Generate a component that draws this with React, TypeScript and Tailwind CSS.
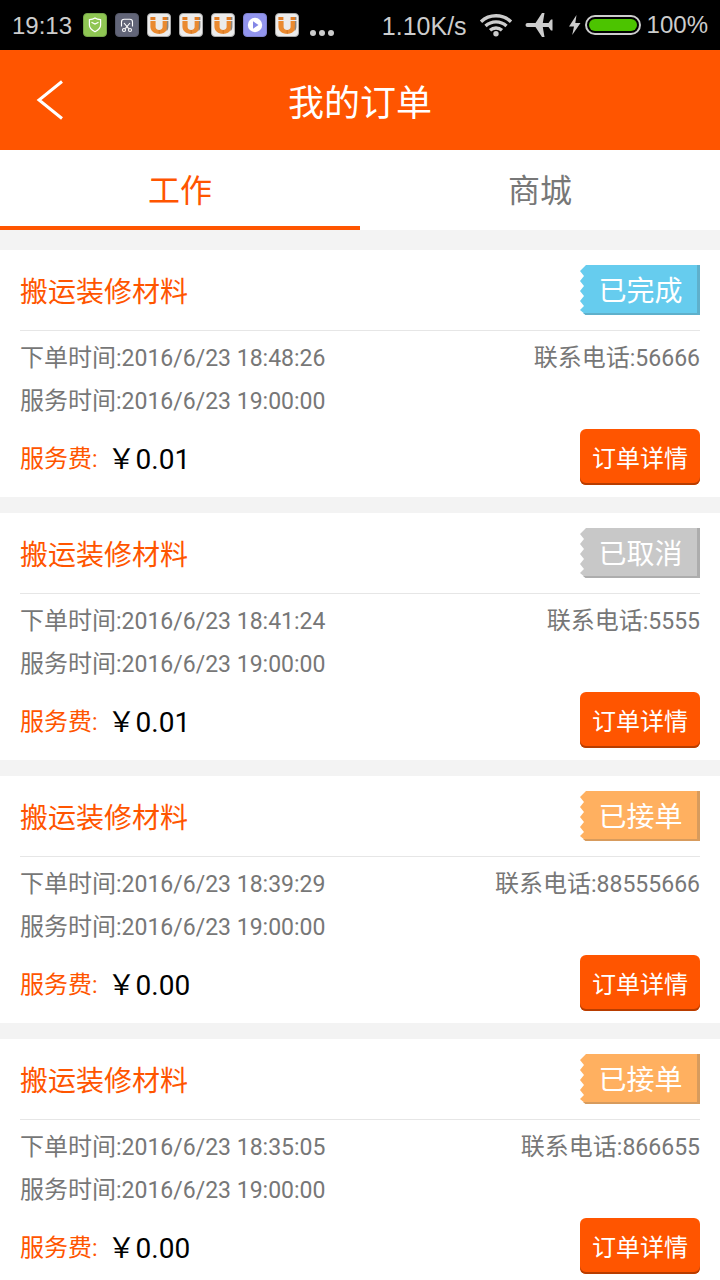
import { useState } from 'react';
import type { ReactNode } from 'react';

type Status = 'done' | 'cancelled' | 'accepted';

interface Order {
  id: number;
  title: string;
  status: Status;
  orderedAt: string;
  serviceAt: string;
  phone: string;
  fee: string;
}

const ORDERS: Order[] = [
  { id: 1, title: '搬运装修材料', status: 'done', orderedAt: '2016/6/23 18:48:26', serviceAt: '2016/6/23 19:00:00', phone: '56666', fee: '0.01' },
  { id: 2, title: '搬运装修材料', status: 'cancelled', orderedAt: '2016/6/23 18:41:24', serviceAt: '2016/6/23 19:00:00', phone: '5555', fee: '0.01' },
  { id: 3, title: '搬运装修材料', status: 'accepted', orderedAt: '2016/6/23 18:39:29', serviceAt: '2016/6/23 19:00:00', phone: '88555666', fee: '0.00' },
  { id: 4, title: '搬运装修材料', status: 'accepted', orderedAt: '2016/6/23 18:35:05', serviceAt: '2016/6/23 19:00:00', phone: '866655', fee: '0.00' },
];

const STATUS = {
  done: { label: '已完成', box: 'bg-[#66ccee] border-[#5fb0cb]', edge: 'fill-[#66ccee]', shade: 'fill-[#5fb0cb]' },
  cancelled: { label: '已取消', box: 'bg-[#c8c8c8] border-[#adadad]', edge: 'fill-[#c8c8c8]', shade: 'fill-[#adadad]' },
  accepted: { label: '已接单', box: 'bg-[#ffb060] border-[#d79b5d]', edge: 'fill-[#ffb060]', shade: 'fill-[#d79b5d]' },
};

const TABS = ['工作', '商城'];

function MagnetIcon() {
  return (
    <svg viewBox="0 0 24 24" className="size-6">
      <rect x="0.5" y="0.5" width="23" height="23" rx="3.5" fill="#ececec" stroke="#a9a9a9" />
      <path d="M8.6 8v6.2a3.6 3.6 0 0 0 7 0V8h5v5.5c0 4.5-3.5 7.3-8.5 7.3s-8.7-2.8-8.7-7.3V8z" fill="#ea8a30" />
      <path d="M3.4 4h5v3h-5zM15.6 4h5v3h-5z" fill="#e27d24" />
      <path d="M20 4h1.4v3H20zM20 8h1.4v5.5c0 2-.6 3.6-1.8 4.8z" fill="#8b8580" />
      <path d="M12.2 17v4" stroke="#c96a1c" strokeWidth="0.7" />
    </svg>
  );
}

function ShieldIcon() {
  return (
    <svg viewBox="0 0 24 24" className="size-6">
      <rect x="0.5" y="0.5" width="23" height="23" rx="3.5" fill="#8fc653" stroke="#75a648" />
      <path d="M12 5c1.6 1.2 3.5 1.6 5.6 1.7V12c0 3.2-2.3 5.1-5.6 6.8-3.3-1.7-5.6-3.6-5.6-6.8V6.7C8.5 6.6 10.4 6.2 12 5z" fill="none" stroke="#fff" strokeWidth="1.2" />
      <path d="M8.5 9.3 12 11l3.5-1.7" fill="none" stroke="#fff" strokeWidth="1.2" />
    </svg>
  );
}

function ScissorsIcon() {
  return (
    <svg viewBox="0 0 24 24" className="size-6">
      <rect x="0.5" y="0.5" width="23" height="23" rx="3.5" fill="#626578" stroke="#555869" />
      <g fill="none" stroke="#fff" strokeWidth="1.1">
        <path d="M6.5 13.5V9c0-1.7 1-2.7 2.7-2.7h5.6c1.7 0 2.7 1 2.7 2.7v4.5" />
        <path d="m9 10 4.7 5.7M15 10l-4.7 5.7" />
        <circle cx="9" cy="17" r="1.5" />
        <circle cx="15" cy="17" r="1.5" />
      </g>
    </svg>
  );
}

function PlayIcon() {
  return (
    <svg viewBox="0 0 24 24" className="size-6">
      <rect x="0.5" y="0.5" width="23" height="23" rx="3.5" fill="#9295ee" stroke="#7f82cf" />
      <circle cx="12" cy="12" r="7.2" fill="#fff" />
      <path d="M10 8.3v7.4l5.5-3.7z" fill="#8487e6" />
    </svg>
  );
}

function StatusBar() {
  return (
    <div className="flex h-[50px] shrink-0 items-center justify-between bg-black px-3 font-['Liberation_Sans',Arial,sans-serif] text-[24px] leading-none text-[#cccccc]">
      <div className="flex items-center gap-2">
        <span className="w-[63px] pt-0.5 whitespace-nowrap">19:13</span>
        <ShieldIcon />
        <ScissorsIcon />
        <MagnetIcon />
        <MagnetIcon />
        <MagnetIcon />
        <PlayIcon />
        <MagnetIcon />
        <svg viewBox="0 0 28 24" className="h-6 w-7" fill="currentColor">
          <circle cx="6" cy="20" r="3" />
          <circle cx="15" cy="20" r="3" />
          <circle cx="24" cy="20" r="3" />
        </svg>
      </div>
      <div className="flex items-center">
        <span className="pt-0.5 text-[25px]">1.10K/s</span>
        {/* wifi */}
        <svg viewBox="0 0 34 24" className="ml-3 h-6 w-[34px]" fill="none" stroke="currentColor" strokeWidth="3.4">
          <path d="M2 8.7a22 22 0 0 1 30 0M6.5 13a15.500 15.500 0 0 1 21 0M11 17.200a9.300 9.300 0 0 1 12 0" />
          <circle cx="17" cy="20.700" r="2.700" fill="currentColor" stroke="none" />
        </svg>
        {/* airplane mode */}
        <svg viewBox="0 0 28 24" className="ml-3 h-6 w-7" fill="currentColor">
          <path d="M2.500 10h8L17 0h2.500l-1.700 10h5.700L26 6.500h1.500V17.500H26L23.500 14h-5.700l1.700 10H17l-6.500-10h-8a2 2 0 0 1 0-4z" />
        </svg>
        {/* charging battery */}
        <svg viewBox="0 0 12 20" className="ml-4 h-5 w-3" fill="currentColor">
          <path d="M7.500 0 0 11.500h5L3.200 20 11.500 8H6.300z" />
        </svg>
        <svg viewBox="0 0 56 20" className="ml-1 h-5 w-14">
          <rect x="1" y="1" width="54" height="18" rx="9" fill="none" stroke="#cccccc" strokeWidth="2" />
          <rect x="4" y="4" width="48" height="12" rx="6" fill="#4cc400" />
        </svg>
        <span className="ml-1.5">100%</span>
      </div>
    </div>
  );
}

function StatusBadge({ status }: { status: Status }) {
  const s = STATUS[status];
  return (
    <div className="flex h-[50px] w-[120px]">
      <svg viewBox="0 0 6 50" className="h-full w-1.5 shrink-0">
        <path d="M6 0 0 6l4 5-4 5 4 5-4 5 4 5-4 5 4 5-4 4 6 5z" className={s.edge} />
        <path d="M3 48h3v2H5.500z" className={s.shade} />
      </svg>
      <span className={`flex flex-1 items-center justify-center border-r-3 border-b-2 pr-0.5 text-[28px] text-white ${s.box}`}>
        {s.label}
      </span>
    </div>
  );
}

// latin digits next to the chinese labels
function Latin({ children }: { children: ReactNode }) {
  return <span className="font-[Roboto,sans-serif] text-[23px] leading-none">{children}</span>;
}

function OrderCard({ order }: { order: Order }) {
  return (
    <article className="shrink-0 bg-white px-5 pb-3">
      <div className="flex h-[81px] items-center justify-between border-b border-[#e6e6e6]">
        <h2 className="text-[28px] text-[#ff5500]">{order.title}</h2>
        <StatusBadge status={order.status} />
      </div>

      <div className="pt-[3px] text-[24px] leading-[43px] text-[#777777]">
        <div className="flex justify-between">
          <p>下单时间<Latin>:{order.orderedAt}</Latin></p>
          <p>联系电话<Latin>:{order.phone}</Latin></p>
        </div>
        <p>服务时间<Latin>:{order.serviceAt}</Latin></p>
      </div>

      <div className="mt-[9px] flex items-center justify-between">
        <p className="flex items-center gap-2.5">
          <span className="text-[24px] text-[#ff5500]">服务费<Latin>:</Latin></span>
          <span className="text-[28px] text-black">
            ￥<span className="font-[Roboto,sans-serif] leading-none">{order.fee}</span>
          </span>
        </p>
        <button
          type="button"
          className="h-14 w-[120px] rounded-md bg-[#ff5500] text-[24px] text-white shadow-[inset_0_-2px_0_#b83d00]"
        >
          订单详情
        </button>
      </div>
    </article>
  );
}

export default function App() {
  const [tab, setTab] = useState(0);

  return (
    <div className="flex h-screen flex-col bg-[#f3f3f3] font-['Noto_Sans_CJK_SC',sans-serif]">
      <StatusBar />

      <header className="grid h-[100px] shrink-0 grid-cols-[100px_1fr_100px] items-center bg-[#ff5500] text-white">
        <button type="button" aria-label="返回" className="flex h-full items-center justify-center">
          <svg viewBox="0 0 28 40" className="h-10 w-7" fill="none" stroke="currentColor" strokeWidth="3">
            <path d="M26 1.500 3 20l23 18.500" />
          </svg>
        </button>
        <h1 className="text-center text-[36px]">我的订单</h1>
      </header>

      <nav className="flex h-20 shrink-0 bg-white">
        {TABS.map((name, i) => (
          <button
            key={name}
            type="button"
            onClick={() => setTab(i)}
            className={`flex-1 border-b-4 text-[32px] ${
              tab === i ? 'border-[#ff5500] text-[#ff5500]' : 'border-white text-[#777777]'
            }`}
          >
            {name}
          </button>
        ))}
      </nav>

      <main className="flex flex-1 flex-col gap-4 overflow-y-auto pt-5 [scrollbar-width:none]">
        {ORDERS.map((order) => (
          <OrderCard key={order.id} order={order} />
        ))}
      </main>
    </div>
  );
}
